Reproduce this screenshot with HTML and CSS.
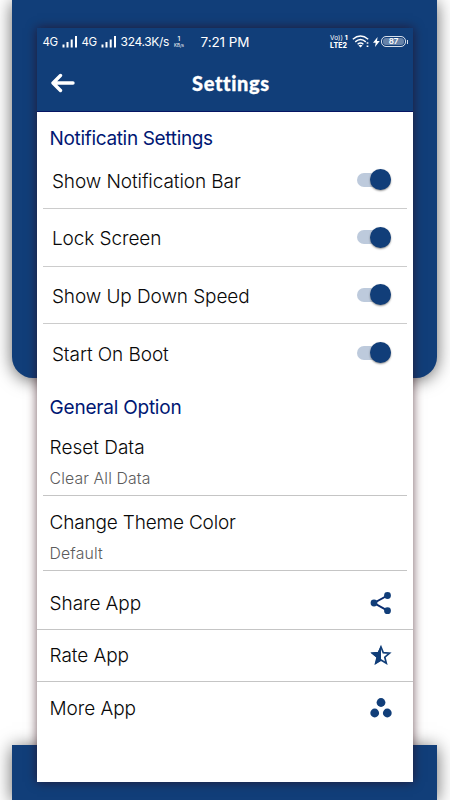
FILE: index.html
```html
<!DOCTYPE html>
<html lang="en">
<head>
<meta charset="utf-8">
<title>Settings</title>
<link rel="stylesheet" href="styles.css">
</head>
<body>
<div class="stage">
  <div class="backdrop"><div class="panel panel-top"></div><div class="panel panel-bottom"></div></div>
  <main class="phone">
    <header class="top">
      <div class="status">
        <div class="status-left">
          <span class="net">4G</span>
          <svg class="bars" width="16" height="12" viewBox="0 0 16 12"><path d="M1.500 8.500v3M5.500 6v5.500M9.700 3.500v8M14 0v11.500" stroke="#fff" stroke-width="2"/></svg>
          <span class="net">4G</span>
          <svg class="bars" width="16" height="12" viewBox="0 0 16 12"><path d="M1.500 8.500v3M5.500 6v5.500M9.700 3.500v8M14 0v11.500" stroke="#fff" stroke-width="2"/></svg>
          <span class="rate">324.3K/s</span>
          <span class="unit"><b>1</b><i>KB/s</i></span>
        </div>
        <span class="clock">7:21 PM</span>
        <div class="status-right">
          <span class="volte"><span>Vo)) <b>1</b></span><span><b>LTE2</b></span></span>
          <svg width="18" height="13" viewBox="0 0 18 13" fill="none" stroke="#fff" stroke-width="1.400"><path d="M.8 4.300Q8.500-2.300 16.200 4.300M3.200 6.900Q8.500 2.300 13.800 6.900M5.600 9.300Q8.500 6.800 11.400 9.300"/><path d="M8.500 12.500l-2-2.100q2-1.400 4 0z" fill="#fff" stroke="none"/><path d="M15.500 7.300v1.500M15.500 10.500v1.500" stroke-width="1.700"/></svg>
          <svg class="bolt" width="7" height="10" viewBox="0 0 7 10"><path d="M4.600 0L0 5.700h2.700L2 10l4.800-6H4z" fill="#fff"/></svg>
          <span class="battery">87</span><span class="cap"></span>
        </div>
      </div>
      <div class="appbar">
        <svg class="back" width="24" height="20" viewBox="0 0 24 20"><path d="M22 10H2.500M9.500 2.500L2 10l7.500 7.500" fill="none" stroke="#fff" stroke-width="3.400" stroke-linecap="round" stroke-linejoin="round"/></svg>
        <h1>Settings</h1>
      </div>
    </header>
    <h2 class="h-notif">Notificatin Settings</h2>
    <section class="toggles">
      <div class="toggle"><span>Show Notification Bar</span><span class="switch"></span></div>
      <div class="toggle"><span>Lock Screen</span><span class="switch"></span></div>
      <div class="toggle"><span>Show Up Down Speed</span><span class="switch"></span></div>
      <div class="toggle"><span>Start On Boot</span><span class="switch"></span></div>
    </section>
    <h2 class="h-general">General Option</h2>
    <section class="options">
      <div class="option reset"><span>Reset Data</span><small>Clear All Data</small></div>
      <div class="option theme"><span>Change Theme Color</span><small>Default</small></div>
    </section>
    <nav class="links">
      <div class="link share"><span>Share App</span>
        <svg width="24" height="24" viewBox="0 0 24 24" fill="#113e79"><path d="M18.500 4.500L5 12l13.500 7.700" fill="none" stroke="#0a2c70" stroke-width="2"/><circle cx="18.500" cy="4.500" r="3.400"/><circle cx="5" cy="12" r="3.400"/><circle cx="18.500" cy="19.700" r="3.400"/></svg></div>
      <div class="link"><span>Rate App</span>
        <svg width="24" height="24" viewBox="0 0 24 24"><path d="M12 4l2.300 5.700 6.200.5-4.700 4 1.500 6-5.300-3.200-5.300 3.200 1.500-6-4.700-4 6.200-.5z" fill="none" stroke="#113e79" stroke-width="1.700"/><path d="M12 2.500v15l-6 4 1.600-7L1.600 9.700l7.200-.7z" fill="#113e79"/></svg></div>
      <div class="link more"><span>More App</span>
        <svg width="24" height="24" viewBox="0 0 24 24" fill="#113e79"><circle cx="12" cy="6.500" r="4.400"/><circle cx="5.700" cy="17" r="4.400"/><circle cx="18.300" cy="17" r="4.400"/></svg></div>
    </nav>
  </main>
</div>
</body>
</html>
```
FILE: styles.css
```css
* { box-sizing: border-box; }
body { margin: 0; background: #fff; font-family: Inter, "Liberation Sans", sans-serif; color: #080808; }
.stage { display: grid; width: 450px; height: 800px; overflow: hidden; }
.backdrop, .phone { grid-area: 1 / 1; }
.backdrop { display: flex; flex-direction: column; justify-content: space-between; padding: 0 13px 0 12px; height: 800px; }
.panel { background: #113e79; box-shadow: 0 2px 17px rgba(0,0,0,.6); }
.panel-top { height: 378px; border-radius: 0 0 21px 21px; }
.panel-bottom { height: 55px; }
.phone { z-index: 1; width: 376.8px; height: 754px; margin: 28px 0 0 36.6px; background: #fff; box-shadow: 0 0 10px rgba(45,5,15,.65); }
.top { height: 84px; background: #113e79; border-bottom: 1px solid #061563; color: #fff; }
.status { height: 27px; display: grid; grid-template-columns: 164px 99px 1fr; align-items: center; font-size: 12px; }
.status-left { display: flex; align-items: center; padding-left: 6px; white-space: nowrap; }
.net { width: 17px; font-size: 11.5px; letter-spacing: -.4px; padding-top: 1px; }
.bars { margin: 0 4px 0 2px; }
.rate { font-size: 12px; letter-spacing: -.35px; }
.unit { display: flex; flex-direction: column; align-items: center; margin-left: 5px; font-size: 4.5px; line-height: 6px; }
.unit b { font-size: 6.5px; line-height: 8px; font-weight: 500; }
.unit i { font-style: normal; }
.clock { font-size: 13.5px; letter-spacing: -.1px; }
.status-right { display: flex; align-items: center; }
.volte { display: flex; flex-direction: column; font-size: 6.5px; line-height: 8px; width: 19px; margin: 0 3px 0 30.5px; white-space: nowrap; }
.volte b { font-weight: 800; }
.volte span + span { font-size: 7px; }
.bolt { margin: 0 1px 0 3px; flex: none; }
.battery { flex: none; width: 25px; height: 11px; border: 1px solid #d6deea; border-radius: 5px; background: #6682a8; box-shadow: inset 0 0 0 1px #113e79; font-size: 8px; line-height: 9px; text-align: center; font-weight: 600; }
.cap { width: 1px; height: 4px; background: #d6deea; margin-left: 1px; }
.appbar { height: 56px; display: grid; grid-template-columns: 155.5px 1fr; align-items: center; }
.back { margin-left: 14.5px; }
h1 { margin: -1px 0 0; font: 900 20px Lato, sans-serif; letter-spacing: .6px; -webkit-text-stroke: .3px #fff; }
h2 { margin: 0; padding-left: 13px; font-size: 19px; font-weight: 400; color: #001773; line-height: 24px; }
.h-notif { padding-top: 15px; height: 39.5px; letter-spacing: -.34px; }
.toggle { display: flex; align-items: center; justify-content: space-between; height: 57.5px; margin: 0 6.5px; padding: 0 15.8px 0 8.8px; border-bottom: 1px solid #ccc; font-size: 19px; font-weight: 300; letter-spacing: -.08px; }
.toggle span:first-child { padding-top: 3px; }
.toggle:last-child { border-bottom: 0; }
.switch { width: 34px; height: 14px; border-radius: 7px; background: #bdcadc; display: flex; align-items: center; justify-content: flex-end; }
.switch::after { content: ""; width: 21px; height: 21px; border-radius: 50%; background: #113e79; box-shadow: 0 1px 2px rgba(0,0,0,.45); }
.h-general { height: 38.5px; padding-top: 14px; letter-spacing: -.22px; }
.option { height: 75.5px; margin: 0 6.5px; padding: 15px 0 0 6.5px; border-bottom: 1px solid #c5c5c5; display: flex; flex-direction: column; font-size: 19px; line-height: 24px; font-weight: 300; }
.option.reset { padding-top: 16px; }
.option.theme { letter-spacing: -.18px; }
.option small { font-size: 15.8px; line-height: 20px; color: #5c5c5c; margin-top: 9px; letter-spacing: .12px; }
.link { display: flex; align-items: center; justify-content: space-between; height: 52.5px; padding: 0 20.4px 0 13px; border-bottom: 1px solid #c5c5c5; font-size: 19px; font-weight: 300; letter-spacing: -.08px; }
.link span { padding-top: 1px; }
.link.share { height: 58.5px; padding-top: 7px; }
.link.more { border-bottom: 0; }
```
